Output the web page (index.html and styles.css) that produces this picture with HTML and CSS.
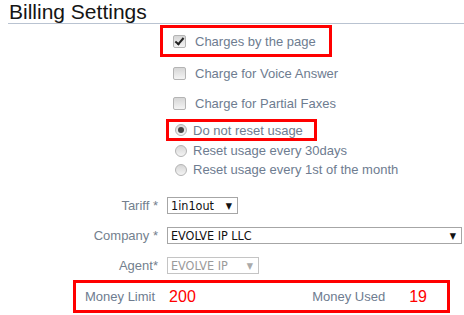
FILE: index.html
```html
<!DOCTYPE html>
<html lang="en">
<head>
  <meta charset="UTF-8" />
  <title>Billing Settings</title>
  <link rel="stylesheet" href="styles.css">
</head>
<body>
  <h1 class="title">Billing Settings</h1>

  <div class="options">
    <label class="opt hl first"><input type="checkbox" checked> Charges by the page</label>
    <label class="opt"><input type="checkbox"> Charge for Voice Answer</label>
    <label class="opt"><input type="checkbox"> Charge for Partial Faxes</label>
  </div>

  <div class="radios">
    <label class="rad hl"><input type="radio" name="reset" checked> Do not reset usage</label>
    <label class="rad"><input type="radio" name="reset"> Reset usage every 30days</label>
    <label class="rad"><input type="radio" name="reset"> Reset usage every 1st of the month</label>
  </div>

  <div class="fields">
    <span class="lbl">Tariff *</span>
    <div class="sel sel-tariff">1in1out <span class="arrow">▼</span></div>

    <span class="lbl">Company *</span>
    <div class="sel sel-company">EVOLVE IP LLC <span class="arrow">▼</span></div>

    <span class="lbl">Agent*</span>
    <div class="sel sel-agent disabled">EVOLVE IP <span class="arrow">▼</span></div>
  </div>

  <div class="money">
    <span class="m-lbl">Money Limit</span>
    <span class="m-val limit">200</span>
    <span class="m-lbl used">Money Used</span>
    <span class="m-val last">19</span>
  </div>
</body>
</html>
```

FILE: styles.css
```css
body {
  margin: 0;
  font-family: "Liberation Sans", Arial, sans-serif;
  font-size: 13px;
  color: #6e7c90;
  background: #fff;
}
.title {
  margin: 0 0 0 8px;
  padding-left: 1px;
  font-size: 21px;
  font-weight: normal;
  line-height: 23px;
  color: #151515;
  border-bottom: 1px solid #b9c3d1;
}

.options {
  margin: 1px 0 0 160px;
  display: flex;
  flex-direction: column;
  align-items: flex-start;
  gap: 2px;
}
.opt {
  display: flex;
  align-items: center;
  gap: 9px;
  height: 22px;
  padding: 0 13px 0 10px;
  border: 3px solid transparent;
}
.opt.first {
  height: 26px;
}

input[type=checkbox],
input[type=radio] {
  appearance: none;
  margin: 0;
  flex: none;
  position: relative;
  background: linear-gradient(#d6d6d6, #f4f4f4);
  border: 1px solid #b4b4b4;
}
input[type=checkbox] {
  width: 13px;
  height: 13px;
  border-radius: 2px;
}
input[type=checkbox]:checked::after {
  content: "";
  position: absolute;
  left: 3px;
  top: 0px;
  width: 3px;
  height: 7px;
  border: solid #222;
  border-width: 0 2px 2px 0;
  transform: rotate(40deg);
}
input[type=radio] {
  width: 12px;
  height: 12px;
  border-radius: 50%;
}
input[type=radio]:checked::after {
  content: "";
  position: absolute;
  left: 2px;
  top: 2px;
  width: 6px;
  height: 6px;
  border-radius: 50%;
  background: #444;
}

.radios {
  margin: 2px 0 0 166px;
  display: flex;
  flex-direction: column;
  align-items: flex-start;
}
.rad {
  display: flex;
  align-items: center;
  gap: 6px;
  height: 19px;
  padding: 0 11px 0 6px;
  border: 3px solid transparent;
  border-width: 0 3px;
}
.rad.hl {
  height: 16px;
  border-width: 3px;
}
.opt.hl,
.rad.hl {
  border-color: #f00;
}

.fields {
  margin-top: 18px;
  display: grid;
  grid-template-columns: 158px auto;
  column-gap: 9px;
  row-gap: 13px;
  justify-items: start;
  align-items: center;
}
.lbl {
  justify-self: end;
  color: #737f8e;
}
.sel {
  box-sizing: border-box;
  height: 17px;
  display: flex;
  align-items: center;
  justify-content: space-between;
  padding: 0 5px 0 3px;
  border: 1px solid #a6a6a6;
  color: #111;
  font-family: "DejaVu Sans Condensed", "DejaVu Sans", sans-serif;
  font-size: 12.5px;
}
.arrow {
  font-size: 9px;
  margin-left: 6px;
}
.sel-tariff {
  width: 71px;
}
.sel-company {
  width: 295px;
}
.sel-agent {
  width: 92px;
}
.sel.disabled {
  color: #9a9a9a;
  border-color: #c4c4c4;
}
.sel.disabled .arrow {
  color: #aaa;
}

.money {
  margin: 6px 0 0 73px;
  width: 362px;
  height: 27px;
  border: 3px solid #f00;
  display: flex;
  align-items: center;
  padding-left: 9px;
}
.m-lbl {
  color: #6e7c90;
}
.m-val {
  color: #f00;
  font-size: 16px;
  margin-left: 14px;
}
.m-val.limit {
  margin-right: auto;
}
.used {
  margin-right: 24px;
}
.m-val.last {
  margin-left: 0;
  margin-right: 20px;
}
```
